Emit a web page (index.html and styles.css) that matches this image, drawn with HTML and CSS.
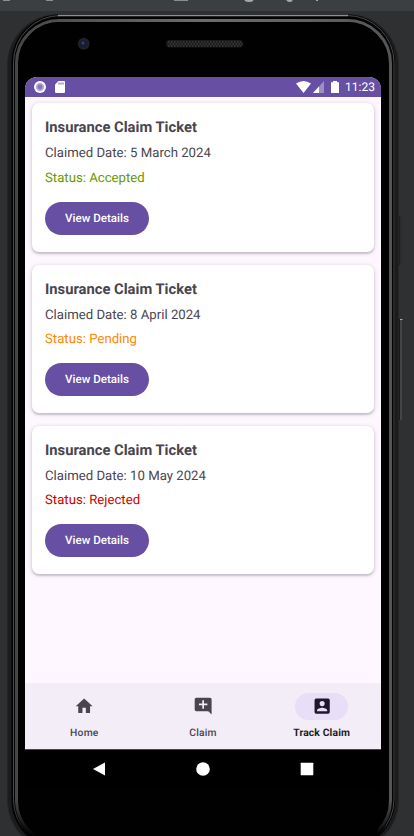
FILE: index.html
```
<!DOCTYPE html>
<html lang="en">
<head>
<meta charset="utf-8">
<title>Track Claim</title>
<link rel="stylesheet" href="styles.css">
</head>
<body>
<svg class="frame" viewBox="0 0 414 836" fill="none" aria-hidden="true">
  <defs>
    <linearGradient id="edge" x1="0" y1="0" x2="1" y2="0"><stop offset="0" stop-color="#464647"/><stop offset=".5" stop-color="#6d6b6e"/><stop offset="1" stop-color="#555556"/></linearGradient>
    <linearGradient id="fade" x1="0" y1="0" x2="0" y2="1"><stop offset="0" stop-color="#010101" stop-opacity="0"/><stop offset="1" stop-color="#010101"/></linearGradient>
  </defs>
  <rect width="414" height="11" fill="#3b3f41"/>
  <path d="M3 0h7M46 0h7M174 0h14" stroke="#8b8e90" stroke-width="2"/>
  <path d="M245 0q4 2 8 0M287 0q3 2 5 0M316 0h2" stroke="#a6a8a9" stroke-width="2"/>
  <rect x="7.5" y="14.500" width="391" height="836" rx="50" fill="#1b1c1d" stroke="#242526"/>
  <rect x="11.5" y="14.500" width="383.500" height="834" rx="48" fill="#030303"/>
  <rect x="13.500" y="15.500" width="380.500" height="831" rx="47" stroke="#4a4a4b"/>
  <path d="M58 15.500H348" stroke="#908e93" stroke-width="1.300"/>
  <rect x="16.500" y="20.500" width="374" height="823" rx="43" fill="#010101" stroke="url(#edge)" stroke-width="3"/>
  <rect x="18.500" y="22" width="369.500" height="820" rx="41" fill="#010101"/>
  <path d="M29 821H378V838H38z" fill="#010101"/>
  <path d="M13 800Q14 820 29 836H379Q392 820 393 800z" fill="url(#fade)"/>
  <path d="M400.500 216V265" stroke="#18191a" stroke-width="2.500"/>
  <path d="M401 216V265" stroke="#3d3e3f"/>
  <path d="M400.500 319V420" stroke="#19191a" stroke-width="3"/>
  <path d="M401 319V420" stroke="#727374"/>
  <path d="M400 319.500h2.500" stroke="#aaa"/>
  <circle cx="83.700" cy="43.800" r="6" fill="#202123"/>
  <circle cx="83.700" cy="43.800" r="3.500" fill="#151c36"/>
  <circle cx="83" cy="43" r="1.500" fill="#314273"/>
  <rect x="166" y="40" width="77" height="7.500" rx="3.500" fill="#1b1b1b"/>
  <path d="M168 42h73M169.500 44h73M168 46h73" stroke="#3b3b3b" stroke-width="1.300" stroke-dasharray="1.500 1.500"/>
</svg>
<main class="screen">
  <header class="status">
    <svg class="rec" viewBox="0 0 12 12"><circle cx="6" cy="6" r="6" fill="#fff"/><circle cx="6" cy="6" r="4.200" fill="#b8abd8"/><circle cx="6" cy="6" r="2.400" fill="#8773b8"/></svg>
    <svg class="sd" viewBox="0 0 10 12"><path d="M3.500 0H9q1 0 1 1v10q0 1-1 1H1q-1 0-1-1V3.500z" fill="#fff"/><path d="M4 1.500v2M6 1.500v2M8 1.500v2" stroke="#6750a3" stroke-width="1"/></svg>
    <span class="spacer"></span>
    <svg class="wifi" viewBox="0 0 15 12"><path d="M0 2.500Q7.500-2.500 15 2.500L7.500 12z" fill="#fff"/></svg>
    <svg class="signal" viewBox="0 0 11 12"><path d="M0 12 11 0V12z" fill="#fff" opacity=".35"/><path d="M0 12 6 5.500V12z" fill="#fff"/></svg>
    <svg class="battery" viewBox="0 0 8 12"><path d="M2 0h4v1.200H8V12H0V1.200h2z" fill="#fff"/></svg>
    <time>11:23</time>
  </header>
  <section class="list">
    <article class="card">
      <h2>Insurance Claim Ticket</h2>
      <p>Claimed Date: 5 March 2024</p>
      <p class="accepted">Status: Accepted</p>
      <button>View Details</button>
    </article>
    <article class="card">
      <h2>Insurance Claim Ticket</h2>
      <p>Claimed Date: 8 April 2024</p>
      <p class="pending">Status: Pending</p>
      <button>View Details</button>
    </article>
    <article class="card">
      <h2>Insurance Claim Ticket</h2>
      <p>Claimed Date: 10 May 2024</p>
      <p class="rejected">Status: Rejected</p>
      <button>View Details</button>
    </article>
  </section>
  <nav class="tabs">
    <a class="tab"><span class="pill"><svg viewBox="0 0 24 24"><path d="M10 20v-6h4v6h5v-8h3L12 3 2 12h3v8z"/></svg></span><span>Home</span></a>
    <a class="tab"><span class="pill"><svg viewBox="0 0 24 24"><path d="M22 4c0-1.100-.9-2-2-2H4c-1.100 0-2 .9-2 2v12c0 1.100.9 2 2 2h14l4 4zM17 11h-4v4h-2v-4H7V9h4V5h2v4h4z"/></svg></span><span>Claim</span></a>
    <a class="tab active"><span class="pill"><svg viewBox="0 0 24 24"><path fill-rule="evenodd" d="M5 3h14a2 2 0 0 1 2 2v14a2 2 0 0 1-2 2H5a2 2 0 0 1-2-2V5a2 2 0 0 1 2-2zM15 9a3 3 0 1 0-6 0 3 3 0 0 0 6 0zM6 17v1h12v-1c0-2-4-3.100-6-3.100S6 15 6 17z"/></svg></span><span>Track Claim</span></a>
  </nav>
  <footer class="system">
    <svg viewBox="0 0 14 14"><path d="M13 .5v13L1 7z"/></svg>
    <svg viewBox="0 0 14 14"><circle cx="7" cy="7" r="6.800"/></svg>
    <svg viewBox="0 0 14 14"><rect x=".7" y=".7" width="12.600" height="12.600" rx=".5"/></svg>
  </footer>
</main>
</body>
</html>
```
FILE: styles.css
```
* { box-sizing: border-box; }
body {
  margin: 0;
  width: 414px;
  height: 836px;
  overflow: hidden;
  background: #2f3032;
  font-family: Roboto, "Liberation Sans", sans-serif;
  color: #49454f;
  text-rendering: geometricPrecision;
}
.frame { position: absolute; inset: 0; width: 414px; height: 836px; }
.screen {
  position: relative;
  width: 356px;
  height: 712px;
  margin: 77px 0 0 25px;
  display: flex;
  flex-direction: column;
  overflow: hidden;
  border-radius: 12px 12px 0 0;
  background: #fef7ff;
}
.status {
  flex: 0 0 20px;
  display: flex;
  align-items: center;
  padding: 0 7px 0 9px;
  background: #6750a3;
  color: #fff;
  font-size: 12px;
  line-height: 20px;
}
.rec { width: 12px; height: 12px; margin-right: 9px; }
.sd { width: 10px; height: 12px; }
.spacer { flex: 1; }
.wifi { width: 15px; height: 12px; margin-right: 2px; }
.signal { width: 11px; height: 12px; margin-right: 7px; }
.battery { width: 8px; height: 12px; margin-right: 6px; }
.status time { width: 29px; white-space: nowrap; text-align: right; }
.list {
  flex: 1;
  display: flex;
  flex-direction: column;
  gap: 13px;
  padding: 6.300px 7px 0;
}
.card {
  height: 148.300px;
  padding: 15px 13px 0;
  border-radius: 7px;
  background: #fff;
  box-shadow: 0 1px 4px rgba(60, 50, 65, .26), 0 1.500px 1.500px rgba(60, 50, 65, .14);
}
h2 { margin: 0 0 9px; font-size: 14.750px; line-height: 18px; font-weight: 700; }
p { margin: 0 0 7.500px; font-size: 13.200px; line-height: 17px; }
.accepted { color: #669900; }
.pending { color: #ff8800; }
.rejected { color: #cc0000; }
button {
  display: block;
  width: 104px;
  height: 33px;
  margin-top: 15px;
  padding: 0;
  border: 0;
  border-radius: 17px;
  background: #6750a3;
  color: #fff;
  font: 500 11.600px/33px Roboto, "Liberation Sans", sans-serif;
  text-rendering: geometricPrecision;
}
.tabs {
  flex: 0 0 66px;
  display: flex;
  background: #f3edf7;
}
.tab {
  flex: 1;
  display: flex;
  flex-direction: column;
  align-items: center;
  padding-top: 10px;
  font-size: 10.300px;
  line-height: 14px;
  font-weight: 500;
  letter-spacing: .2px;
}
.pill {
  display: flex;
  align-items: center;
  justify-content: center;
  width: 53px;
  height: 27px;
  margin-bottom: 6px;
  border-radius: 14px;
}
.pill svg { width: 20.300px; height: 20.300px; fill: #49454f; }
.active { color: #1d1b20; font-weight: 700; letter-spacing: .15px; }
.active .pill { background: #e8def8; }
.active svg { fill: #1d192b; }
.system {
  flex: 0 0 40px;
  display: flex;
  align-items: center;
  justify-content: space-between;
  padding: 0 67px;
  border-top: 1px solid #49454f;
  background: #000;
}
.system svg { width: 14px; height: 14px; margin-top: -1px; fill: #fff; }
```
